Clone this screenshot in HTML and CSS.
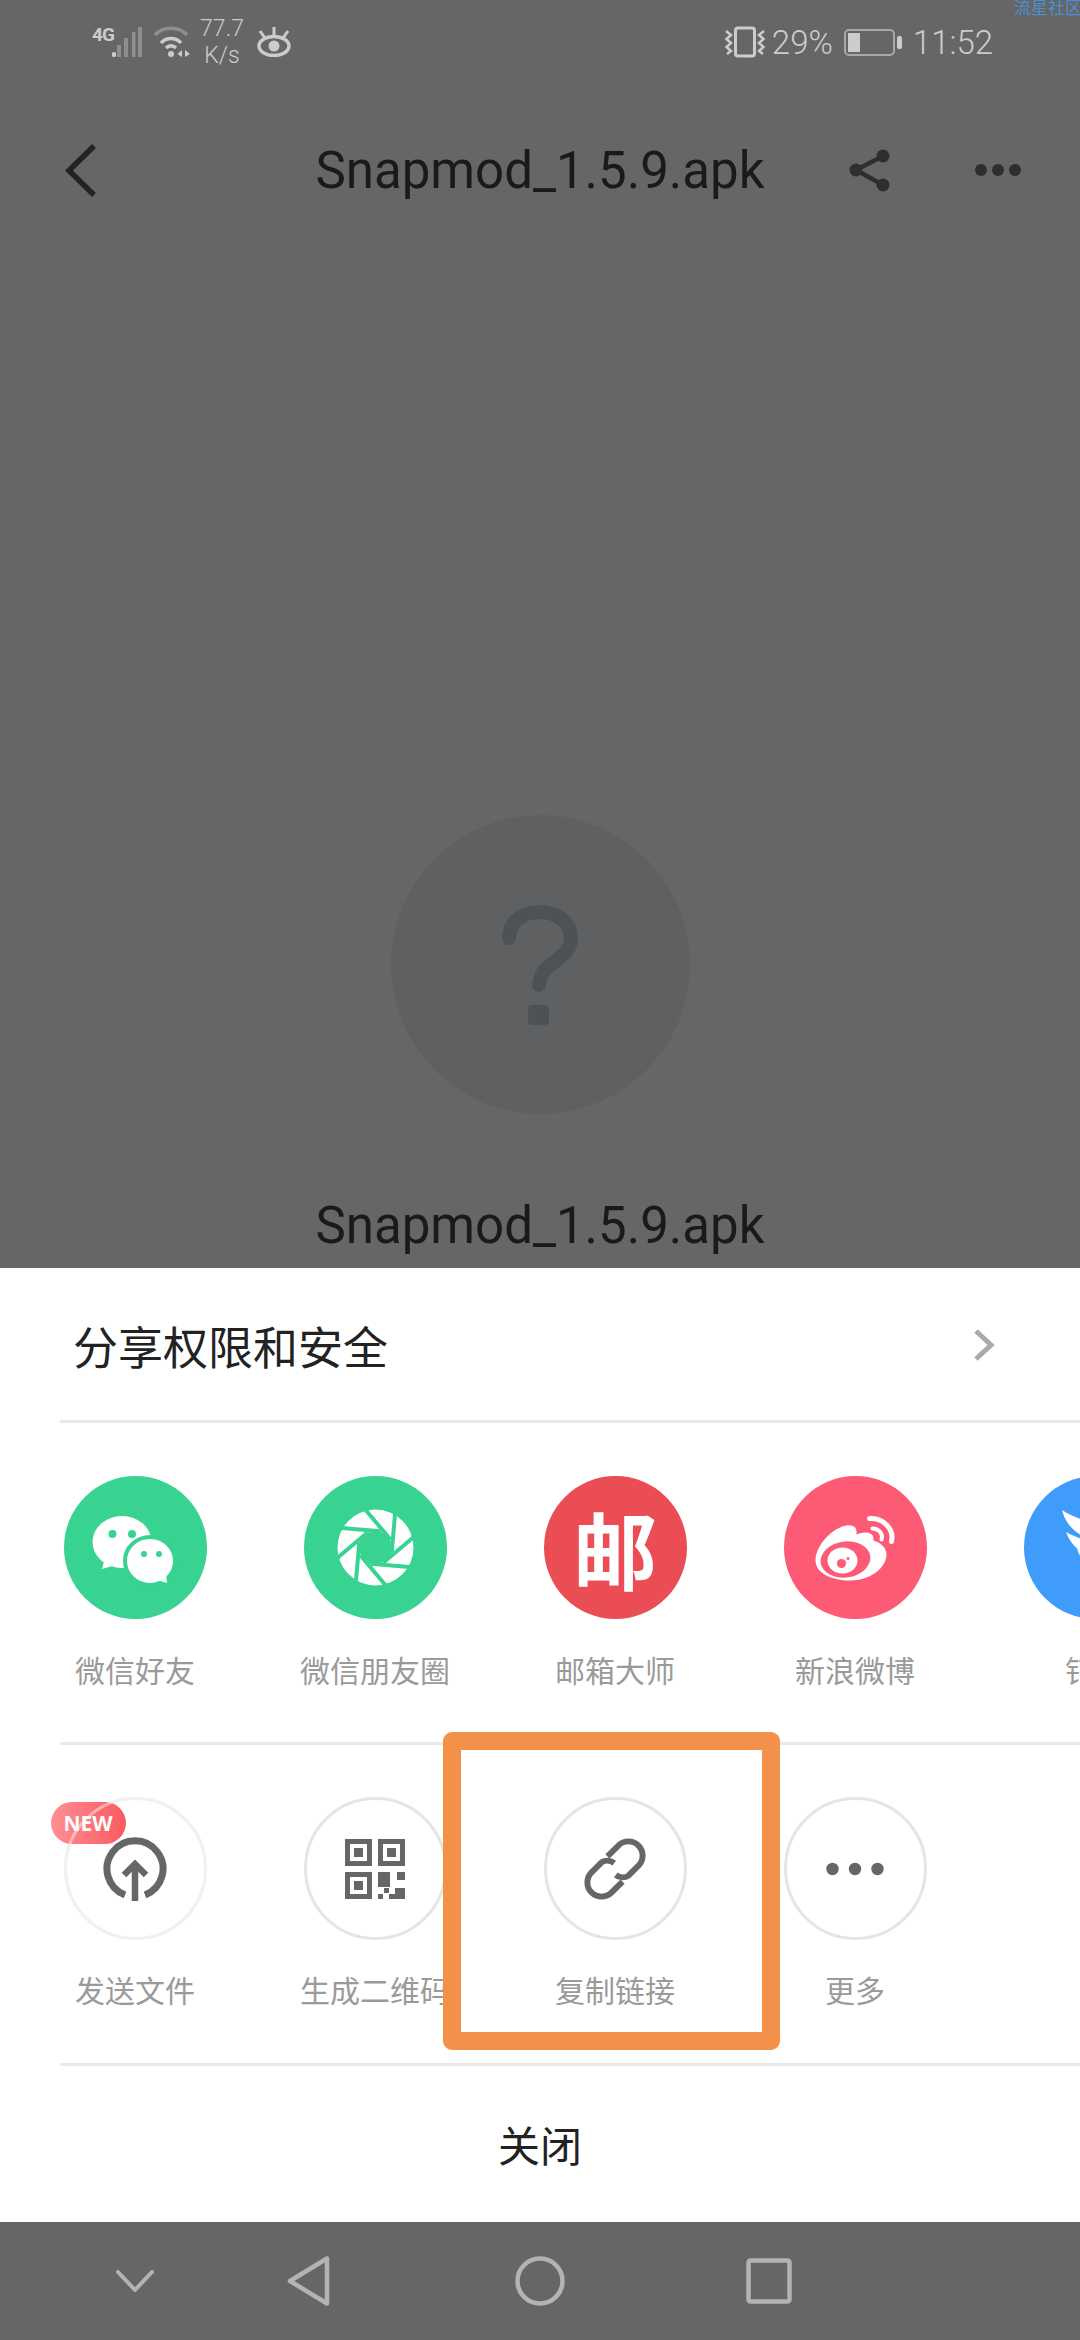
FILE: index.html
```html
<!DOCTYPE html>
<html lang="zh-CN">
<head>
  <meta charset="UTF-8">
  <meta name="viewport" content="width=device-width, initial-scale=1.0">
  <title>Snapmod_1.5.9.apk</title>
  <link rel="stylesheet" href="styles.css">
</head>
<body>

  <div class="screen">

    <div class="dim">
      <span class="watermark">流星社区</span>

      <!-- Barra de estado -->
      <div class="status-bar">
        <span class="net-type">4G</span>
        <svg class="ico-signal" width="32" height="30" viewBox="0 0 32 30">
          <rect x="2" y="25" width="4" height="5" rx="1.5" fill="#ccc"/>
          <rect x="7" y="18" width="4" height="12" fill="#8e8e8e"/>
          <rect x="14" y="11" width="4" height="19" fill="#8e8e8e"/>
          <rect x="22" y="5" width="3.5" height="25" fill="#8e8e8e"/>
          <rect x="28" y="0" width="4" height="30" fill="#8e8e8e"/>
        </svg>
        <svg class="ico-wifi" width="40" height="32" viewBox="0 0 40 32">
          <path d="M2 9 C10 0 26 0 34 9" fill="none" stroke="#8e8e8e" stroke-width="3.5"/>
          <path d="M8 17 C13 11 23 11 28 17" fill="none" stroke="#ccc" stroke-width="3.5"/>
          <path d="M13 22 C16 19 20 19 23 22" fill="none" stroke="#ccc" stroke-width="3.5"/>
          <circle cx="18" cy="28" r="3" fill="#ccc"/>
          <path d="M29 24 V31 L24.5 28Z M32 24 V31 L37 28Z" fill="#ccc"/>
        </svg>
        <div class="net-speed">
          <span>77.7</span>
          <span>K/s</span>
        </div>
        <svg class="ico-eye" width="34" height="30" viewBox="0 0 34 30">
          <ellipse cx="17" cy="19" rx="15" ry="9.5" fill="none" stroke="#ccc" stroke-width="3.5"/>
          <circle cx="17" cy="19" r="5.5" fill="#ccc"/>
          <path d="M17 0 V8 M3 4 L8 11 M31 4 L26 11" stroke="#ccc" stroke-width="3"/>
        </svg>

        <div class="status-right">
          <svg class="ico-vibrate" width="42" height="32" viewBox="0 0 42 32">
            <rect x="11.5" y="2" width="19" height="28" rx="2.5" fill="none" stroke="#ccc" stroke-width="3"/>
            <path d="M2 5 L7 9 L2.500 13 L7 17 L2.500 21 L7 25 L3 28" fill="none" stroke="#ccc" stroke-width="2.500"/>
            <path d="M40 5 L35 9 L39.500 13 L35 17 L39.500 21 L35 25 L39 28" fill="none" stroke="#ccc" stroke-width="2.500"/>
          </svg>
          <span class="battery-pct">29%</span>
          <svg class="ico-battery" width="58" height="27" viewBox="0 0 58 27">
            <rect x="1" y="1" width="49" height="25" rx="4" fill="none" stroke="#a8a8a8" stroke-width="2"/>
            <rect x="4" y="4" width="12" height="19" fill="#ccc"/>
            <rect x="53" y="7" width="5" height="13" rx="2" fill="#ccc"/>
          </svg>
          <span class="clock">11:52</span>
        </div>
      </div>

      <!-- Cabecera -->
      <div class="title-bar">
        <div class="title-left">
          <svg width="32" height="53" viewBox="0 0 32 53">
            <polyline points="29,2 4,26.500 29,51" fill="none" stroke="#222" stroke-width="5.500"/>
          </svg>
        </div>
        <div class="title-text">Snapmod_1.5.9.apk</div>
        <div class="title-right">
          <svg width="42" height="48" viewBox="0 0 42 48">
            <path d="M34 10 L7 24 L34 39" fill="none" stroke="#2e2e2e" stroke-width="4.500"/>
            <circle cx="34" cy="10" r="6.500" fill="#2e2e2e"/>
            <circle cx="7" cy="24" r="6.500" fill="#2e2e2e"/>
            <circle cx="34" cy="39" r="6.500" fill="#2e2e2e"/>
          </svg>
          <svg width="46" height="14" viewBox="0 0 46 14">
            <circle cx="6" cy="7" r="6" fill="#2e2e2e"/>
            <circle cx="23" cy="7" r="6" fill="#2e2e2e"/>
            <circle cx="40" cy="7" r="6" fill="#2e2e2e"/>
          </svg>
        </div>
      </div>

      <!-- Vista previa del archivo -->
      <div class="preview">
        <div class="preview-circle">
          <svg width="76" height="120" viewBox="0 0 76 120">
            <path d="M7 33 C7 17 20 7 38 7 C56 7 69 18 69 33 C69 48 57 52 46 62 C40 67 38 72 37 80" fill="none" stroke="#4d5257" stroke-width="14" stroke-linecap="round"/>
            <rect x="26" y="100" width="21" height="20" rx="4" fill="#4d5257"/>
          </svg>
        </div>
        <div class="preview-name">Snapmod_1.5.9.apk</div>
      </div>
    </div>

    <!-- Hoja de compartir -->
    <div class="sheet">
      <div class="sheet-head">
        <span>分享权限和安全</span>
        <svg width="22" height="34" viewBox="0 0 22 34">
          <polyline points="3,3 18,17 3,31" fill="none" stroke="#aaa" stroke-width="5"/>
        </svg>
      </div>
      <div class="divider"></div>

      <div class="share-row row-apps">
        <div class="share-item">
          <div class="share-icon bg-wechat">
            <svg width="143" height="143" viewBox="0 0 143 143">
              <ellipse cx="58" cy="66" rx="29.500" ry="26" fill="#fff"/>
              <path d="M38 93 L41 82 L52 89Z" fill="#fff"/>
              <circle cx="48.500" cy="58" r="4" fill="#39d391"/>
              <circle cx="68" cy="58" r="4" fill="#39d391"/>
              <ellipse cx="86" cy="85" rx="25" ry="24" fill="#fff" stroke="#39d391" stroke-width="4"/>
              <path d="M103 107 L102 98 L93 104Z" fill="#fff"/>
              <circle cx="80" cy="78" r="3" fill="#39d391"/>
              <circle cx="95" cy="78" r="3" fill="#39d391"/>
            </svg>
          </div>
          <span class="share-label">微信好友</span>
        </div>
        <div class="share-item">
          <div class="share-icon bg-wechat">
            <svg width="143" height="143" viewBox="-71.500 -71.500 143 143">
              <circle r="38" fill="#fff"/>
              <polygon points="15,-8 16.300,5 8,15 -5,16.300 -15,8 -16.300,-5 -8,-15 5,-16.300" fill="#39d391"/>
              <g stroke="#39d391" stroke-width="4">
                <line x1="-12" y1="-40" x2="15" y2="-8"/>
                <line x1="-12" y1="-40" x2="15" y2="-8" transform="rotate(45)"/>
                <line x1="-12" y1="-40" x2="15" y2="-8" transform="rotate(90)"/>
                <line x1="-12" y1="-40" x2="15" y2="-8" transform="rotate(135)"/>
                <line x1="-12" y1="-40" x2="15" y2="-8" transform="rotate(180)"/>
                <line x1="-12" y1="-40" x2="15" y2="-8" transform="rotate(225)"/>
                <line x1="-12" y1="-40" x2="15" y2="-8" transform="rotate(270)"/>
                <line x1="-12" y1="-40" x2="15" y2="-8" transform="rotate(315)"/>
              </g>
            </svg>
          </div>
          <span class="share-label">微信朋友圈</span>
        </div>
        <div class="share-item">
          <div class="share-icon bg-mail">
            <span class="mail-glyph">邮</span>
          </div>
          <span class="share-label">邮箱大师</span>
        </div>
        <div class="share-item">
          <div class="share-icon bg-weibo">
            <svg width="143" height="143" viewBox="-16.500 -21.500 143 143">
              <path d="M15 63 C15 48 32 30 46 28 C54 27 57 31 56 37 C63 34 74 33 73 43 C80 45 86 50 86 57 C86 70 70 83 50 83 C30 83 15 75 15 63Z" fill="#fff"/>
              <ellipse cx="45" cy="62" rx="25" ry="18" transform="rotate(-8 45 62)" fill="#fc5a75"/>
              <ellipse cx="42" cy="63" rx="15" ry="13" fill="#fff"/>
              <circle cx="41" cy="66" r="4.500" fill="#fc5a75"/>
              <circle cx="47.500" cy="61" r="1.500" fill="#fc5a75"/>
              <path d="M69 21 C82 20 94 31 91 44" fill="none" stroke="#fff" stroke-width="5" stroke-linecap="round"/>
              <path d="M72 31 C78 31 83 36 81 42" fill="none" stroke="#fff" stroke-width="4" stroke-linecap="round"/>
            </svg>
          </div>
          <span class="share-label">新浪微博</span>
        </div>
        <div class="share-item">
          <div class="share-icon bg-ding">
            <svg width="143" height="143" viewBox="0 0 143 143">
              <path d="M38 34 C50 42 68 47 90 52 L84 68 C60 64 43 54 38 34Z" fill="#fff"/>
              <path d="M42 56 C52 62 68 66 84 70 L78 84 C60 80 48 72 42 56Z" fill="#fff"/>
              <path d="M53 73 C60 77 68 79 76 80 L72 92 C62 88 56 82 53 73Z" fill="#fff"/>
            </svg>
          </div>
          <span class="share-label">钉钉</span>
        </div>
      </div>
      <div class="divider"></div>

      <div class="share-row row-tools">
        <div class="share-item">
          <div class="share-icon outline outline-new">
            <span class="badge-new">NEW</span>
            <svg width="64" height="64" viewBox="0 0 64 64">
              <path d="M22 58 A28 28 0 1 1 42 58" fill="none" stroke="#666" stroke-width="7"/>
              <path d="M32 28 V64" stroke="#666" stroke-width="6.500"/>
              <polyline points="21,38 32,27 43,38" fill="none" stroke="#666" stroke-width="6.500"/>
            </svg>
          </div>
          <span class="share-label">发送文件</span>
        </div>
        <div class="share-item">
          <div class="share-icon outline">
            <svg width="60" height="60" viewBox="0 0 60 60">
              <g fill="none" stroke="#666" stroke-width="5">
                <rect x="2.500" y="2.500" width="22" height="22"/>
                <rect x="35.500" y="2.500" width="22" height="22"/>
                <rect x="2.500" y="35.500" width="22" height="22"/>
              </g>
              <g fill="#666">
                <rect x="9" y="9" width="9" height="9"/>
                <rect x="42" y="9" width="9" height="9"/>
                <rect x="9" y="42" width="9" height="9"/>
                <rect x="33" y="33" width="12" height="15"/>
                <rect x="52" y="33" width="8" height="8"/>
                <rect x="50" y="49" width="10" height="11"/>
                <rect x="39" y="49" width="5" height="5"/>
                <rect x="33" y="55" width="5" height="5"/>
                <rect x="44" y="55" width="6" height="5"/>
              </g>
            </svg>
          </div>
          <span class="share-label">生成二维码</span>
        </div>
        <div class="share-item">
          <div class="share-icon outline">
            <svg width="64" height="64" viewBox="-27 -27 54 54">
              <g transform="rotate(-45)" fill="none" stroke="#666" stroke-width="5">
                <path d="M3 -12 H16 A12 12 0 0 1 16 12 H4 A9 9 0 0 1 -3 4"/>
                <path d="M3 -12 H16 A12 12 0 0 1 16 12 H4 A9 9 0 0 1 -3 4" transform="rotate(180)"/>
              </g>
            </svg>
          </div>
          <span class="share-label">复制链接</span>
        </div>
        <div class="share-item">
          <div class="share-icon outline">
            <svg width="58" height="14" viewBox="0 0 58 14">
              <circle cx="6.500" cy="7" r="6.200" fill="#666"/>
              <circle cx="29" cy="7" r="6.200" fill="#666"/>
              <circle cx="51.500" cy="7" r="6.200" fill="#666"/>
            </svg>
          </div>
          <span class="share-label">更多</span>
        </div>
      </div>
      <div class="divider"></div>

      <div class="sheet-close">关闭</div>
    </div>

    <!-- Barra de navegacion -->
    <div class="nav-bar">
      <svg class="nav-down" width="38" height="22" viewBox="0 0 38 22">
        <polyline points="2,2 19,20 36,2" fill="none" stroke="#b3b3b3" stroke-width="4" stroke-linecap="round" stroke-linejoin="round"/>
      </svg>
      <svg class="nav-back" width="43" height="50" viewBox="0 0 43 50">
        <path d="M40 2.500 V47.500 L3 25Z" fill="none" stroke="#b3b3b3" stroke-width="4.500" stroke-linejoin="round"/>
      </svg>
      <svg class="nav-home" width="50" height="50" viewBox="0 0 50 50">
        <circle cx="25" cy="25" r="22.500" fill="none" stroke="#b3b3b3" stroke-width="4.500"/>
      </svg>
      <svg class="nav-recent" width="46" height="46" viewBox="0 0 46 46">
        <rect x="2.500" y="2.500" width="41" height="41" rx="2" fill="none" stroke="#b3b3b3" stroke-width="4.500"/>
      </svg>
    </div>

    <!-- Recuadro naranja sobre "copiar enlace" -->
    <div class="highlight"></div>

  </div>

</body>
</html>
```

FILE: styles.css
```css
* {
  margin: 0;
  padding: 0;
  box-sizing: border-box;
}
body {
  width: 1080px;
  height: 2340px;
  overflow: hidden;
  font-family: Roboto, "Noto Sans CJK SC", sans-serif;
  background-color: #666;
}
svg {
  display: block;
  flex-shrink: 0;
}
.screen {
  position: relative;
  width: 1080px;
  height: 2340px;
  display: flex;
  flex-direction: column;
  overflow: hidden;
}

/* zona oscurecida */
.dim {
  position: relative;
  height: 1268px;
  background-color: #666;
  overflow: hidden;
}
.watermark {
  position: absolute;
  top: -3px;
  right: -2px;
  font-size: 17px;
  line-height: 20px;
  color: #4a8fd0;
  font-family: "Noto Sans CJK SC", sans-serif;
}
.status-bar {
  height: 84px;
  padding: 0 87px 0 92px;
  display: flex;
  align-items: center;
  color: #ccc;
}
.net-type {
  font-size: 19px;
  font-weight: 700;
  letter-spacing: -1px;
  width: 18px;
  margin-top: -16px;
}
.ico-wifi {
  margin-left: 11px;
  margin-top: -1px;
}
.net-speed {
  width: 46px;
  margin-left: 6px;
  display: flex;
  flex-direction: column;
  align-items: center;
  font-size: 23px;
  line-height: 27px;
  font-weight: 300;
}
.ico-eye {
  margin-left: 12px;
}
.status-right {
  margin-left: auto;
  display: flex;
  align-items: center;
}
.battery-pct {
  font-size: 33px;
  font-weight: 300;
  margin-left: 6px;
}
.ico-battery {
  margin-left: 11px;
}
.clock {
  font-size: 33px;
  font-weight: 300;
  margin-left: 11px;
}

.title-bar {
  height: 100px;
  margin-top: 36px;
  display: grid;
  grid-template-columns: 1fr auto 1fr;
  align-items: center;
}
.title-left {
  padding-left: 65px;
}
.title-text,
.preview-name {
  font-size: 51px;
  color: #1a1a1a;
  white-space: nowrap;
}
.title-right {
  display: flex;
  justify-content: flex-end;
  align-items: center;
  gap: 84px;
  padding-right: 59px;
}
.preview {
  margin-top: 595px;
  display: flex;
  flex-direction: column;
  align-items: center;
}
.preview-circle {
  width: 299px;
  height: 299px;
  border-radius: 50%;
  background-color: #5e6062;
  display: flex;
  align-items: center;
  justify-content: center;
}
.preview-name {
  margin-top: 82px;
  line-height: 60px;
}

/* hoja inferior */
.sheet {
  height: 954px;
  background-color: #fff;
  font-family: "Noto Sans CJK SC", sans-serif;
}
.sheet-head {
  height: 152px;
  padding: 2px 85px 0 73px;
  display: flex;
  justify-content: space-between;
  align-items: center;
  font-size: 45px;
  color: #222;
}
.divider {
  height: 3px;
  margin-left: 60px;
  background-color: #e9e9e9;
}
.share-row {
  padding-left: 15px;
  display: flex;
  overflow: hidden;
}
.row-apps {
  height: 319px;
  padding-top: 53px;
}
.row-tools {
  height: 318px;
  padding-top: 52px;
}
.share-item {
  width: 240px;
  flex-shrink: 0;
  display: flex;
  flex-direction: column;
  align-items: center;
}
.share-icon {
  position: relative;
  width: 143px;
  height: 143px;
  border-radius: 50%;
  display: flex;
  align-items: center;
  justify-content: center;
}
.bg-wechat {
  background-color: #39d391;
}
.bg-mail {
  background-color: #eb4d55;
}
.bg-weibo {
  background-color: #fc5a75;
}
.bg-ding {
  background-color: #409cfa;
}
.mail-glyph {
  font-size: 84px;
  line-height: 84px;
  font-weight: 700;
  color: #fff;
}
.outline {
  border: 3px solid #e5e5e5;
}
.outline-new::after {
  content: "";
  position: absolute;
  inset: -3px;
  border: 3px solid rgba(255, 255, 255, 0.45);
  border-radius: 50%;
  pointer-events: none;
}
.badge-new {
  position: absolute;
  left: -16px;
  top: 2px;
  width: 75px;
  height: 42px;
  border-radius: 21px;
  background: linear-gradient(90deg, #ff8f93, #fb5a60);
  color: #fff;
  font-family: "Open Sans", sans-serif;
  font-size: 21px;
  font-weight: 700;
  line-height: 42px;
  text-align: center;
}
.share-label {
  margin-top: 30px;
  font-size: 30px;
  line-height: 40px;
  color: #9a9a9a;
  white-space: nowrap;
}
.row-tools .share-label {
  margin-top: 29px;
}
.sheet-close {
  height: 155px;
  display: flex;
  align-items: center;
  justify-content: center;
  font-size: 42px;
  color: #222;
}

/* navegacion */
.nav-bar {
  height: 118px;
  padding-left: 116px;
  background-color: #666;
  display: flex;
  align-items: center;
}
.nav-down {
  margin-top: -1px;
}
.nav-back {
  margin-left: 133px;
}
.nav-home {
  margin-left: 185px;
}
.nav-recent {
  margin-left: 181px;
}

.highlight {
  position: absolute;
  left: 443px;
  top: 1732px;
  width: 337px;
  height: 318px;
  border: 18px solid #f3914b;
  border-radius: 9px;
}
```
